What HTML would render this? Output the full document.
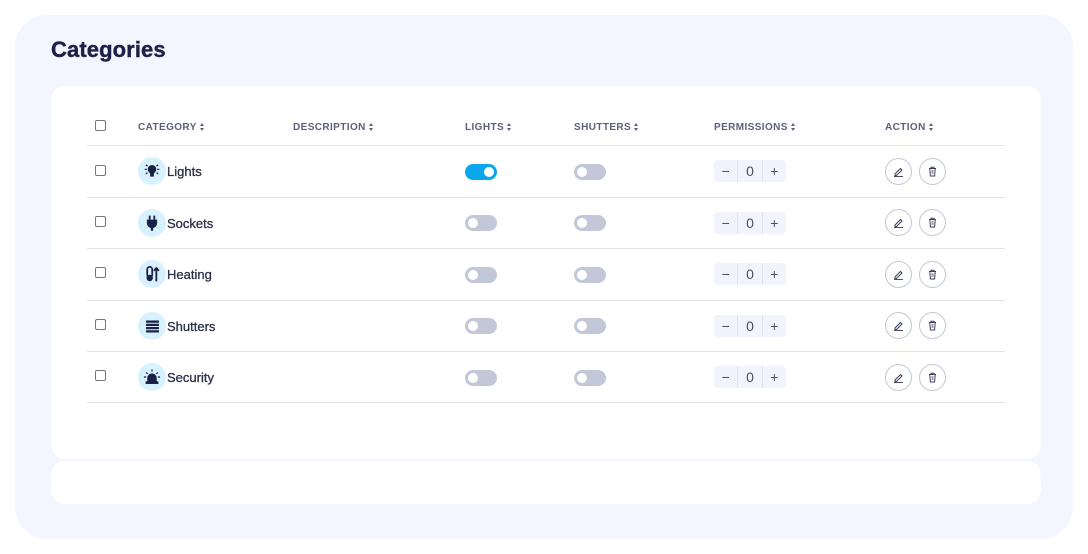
<!DOCTYPE html>
<html><head><style>
*{box-sizing:border-box;margin:0;padding:0}
body{width:1088px;height:554px;background:#fff;font-family:"Liberation Sans",sans-serif;position:relative;overflow:hidden}
.outer{position:absolute;left:15px;top:15px;width:1058px;height:524px;background:#f3f6ff;border-radius:32px}
h1{position:absolute;left:51px;top:37px;font-size:22px;font-weight:900;color:#1b2147;letter-spacing:0.1px;-webkit-text-stroke:0.4px #1b2147}
.card{position:absolute;left:51px;top:86px;width:990px;height:373px;background:#fff;border-radius:14px}
.card2{position:absolute;left:51px;top:461px;width:990px;height:43px;background:#fff;border-radius:14px}
.a{position:absolute}
.hd{font-size:10px;font-weight:bold;color:#5b6178;letter-spacing:0.4px;top:122px}
.sort{display:inline-block;position:relative;width:5px;height:8px;margin-left:3px;vertical-align:-1px}
.sort:before,.sort:after{content:"";position:absolute;left:0;border-left:2.5px solid transparent;border-right:2.5px solid transparent}
.sort:before{top:0;border-bottom:3px solid #5b6178}
.sort:after{bottom:0;border-top:3px solid #5b6178}
.line{left:87px;width:918px;height:1px;background:#e2e3e8}
.cb{width:11px;height:11px;border:1px solid #767676;border-radius:2px;left:95px;background:#fff}
.ic{left:138px;width:28px;height:28px;border-radius:50%;background:#d7f1ff;display:flex;align-items:center;justify-content:center}
.nm{left:167px;font-size:13px;color:#2b2f45;font-weight:normal;-webkit-text-stroke:0.3px #2b2f45}
.tg{width:32px;height:16px;border-radius:8px;background:#c3c8d9}
.tg:after{content:"";position:absolute;left:3px;top:3px;width:10px;height:10px;border-radius:50%;background:#fff}
.tg.on{background:#0aa7ec}.tg.on:after{left:19px}
.pm{left:714px;width:72px;height:22px;background:#f1f4fd;border-radius:4px;display:flex;font-size:14px;color:#4a4f66}
.pm span{flex:1;text-align:center;line-height:22px}
.pm span:nth-child(2){border-left:1px solid #dfe3ee;border-right:1px solid #dfe3ee}
.btn{width:27px;height:27px;border:1px solid #c2c6d6;border-radius:50%;display:flex;align-items:center;justify-content:center;background:#fff}
</style></head><body>
<div class="outer"></div>
<h1>Categories</h1>
<div class="card"></div>
<div class="card2"></div>

<div class="a cb" style="top:120px"></div>
<div class="a hd" style="left:138px">CATEGORY<span class="sort"></span></div>
<div class="a hd" style="left:293px">DESCRIPTION<span class="sort"></span></div>
<div class="a hd" style="left:465px">LIGHTS<span class="sort"></span></div>
<div class="a hd" style="left:574px">SHUTTERS<span class="sort"></span></div>
<div class="a hd" style="left:714px">PERMISSIONS<span class="sort"></span></div>
<div class="a hd" style="left:885px">ACTION<span class="sort"></span></div>
<div class="a line" style="top:145px"></div>
<div class="a line" style="top:197px"></div>
<div class="a line" style="top:248px"></div>
<div class="a line" style="top:300px"></div>
<div class="a line" style="top:351px"></div>
<div class="a line" style="top:402px"></div>

<div class="a cb" style="top:165px"></div>
<div class="a ic" style="top:157px"><svg width="18" height="16" viewBox="0 0 16 14"><circle cx="8" cy="5.5" r="3.8" fill="#1b2147"/><rect x="6.3" y="8.5" width="3.4" height="3.5" fill="#1b2147"/><path d="M1.5 5.5h2M12.5 5.5h2M2.5 1.5l1.5 1.2M13.5 1.5l-1.5 1.2M2.5 9.5l1.5-1M13.5 9.5l-1.5-1" stroke="#1b2147" stroke-width="1.1"/></svg></div>
<div class="a nm" style="top:164px">Lights</div>
<div class="a tg on" style="left:465px;top:164px"></div>
<div class="a tg" style="left:574px;top:164px"></div>
<div class="a pm" style="top:160px"><span>−</span><span>0</span><span>+</span></div>

<div class="a cb" style="top:216px"></div>
<div class="a ic" style="top:209px"><svg width="16" height="16" viewBox="0 0 14 14"><path d="M5 0.5v3.5M9 0.5v3.5" stroke="#1b2147" stroke-width="1.6"/><path d="M2.5 4h9v3a4.5 4.5 0 0 1-9 0z" fill="#1b2147"/><rect x="6" y="10" width="2" height="3.8" fill="#1b2147"/></svg></div>
<div class="a nm" style="top:216px">Sockets</div>
<div class="a tg" style="left:465px;top:215px"></div>
<div class="a tg" style="left:574px;top:215px"></div>
<div class="a pm" style="top:212px"><span>−</span><span>0</span><span>+</span></div>

<div class="a cb" style="top:267px"></div>
<div class="a ic" style="top:260px"><svg width="16" height="16" viewBox="0 0 14 14"><rect x="2.8" y="0.8" width="4.4" height="9" rx="2.2" fill="none" stroke="#1b2147" stroke-width="1.5"/><circle cx="5" cy="10.5" r="2.8" fill="#1b2147"/><path d="M10.8 13.5V2M8.6 4.2l2.2-2.4 2.2 2.4" stroke="#1b2147" stroke-width="1.6" fill="none"/></svg></div>
<div class="a nm" style="top:267px">Heating</div>
<div class="a tg" style="left:465px;top:267px"></div>
<div class="a tg" style="left:574px;top:267px"></div>
<div class="a pm" style="top:263px"><span>−</span><span>0</span><span>+</span></div>

<div class="a cb" style="top:319px"></div>
<div class="a ic" style="top:312px"><svg width="15" height="13" viewBox="0 0 14 12"><path d="M1 1.5h12M1 4.5h12M1 7.5h12M1 10.5h12" stroke="#1b2147" stroke-width="2.1"/></svg></div>
<div class="a nm" style="top:319px">Shutters</div>
<div class="a tg" style="left:465px;top:318px"></div>
<div class="a tg" style="left:574px;top:318px"></div>
<div class="a pm" style="top:315px"><span>−</span><span>0</span><span>+</span></div>

<div class="a cb" style="top:370px"></div>
<div class="a ic" style="top:363px"><svg width="18" height="16" viewBox="0 0 16 14"><path d="M3.8 11V8a4.2 4.2 0 0 1 8.4 0v3z" fill="#1b2147"/><rect x="2.3" y="10.8" width="11.4" height="2.4" fill="#1b2147"/><path d="M0.8 7h2M13.2 7h2M2.8 3l1.3 1.2M13.2 3l-1.3 1.2M8 0.3v1.8" stroke="#1b2147" stroke-width="1.1"/></svg></div>
<div class="a nm" style="top:370px">Security</div>
<div class="a tg" style="left:465px;top:370px"></div>
<div class="a tg" style="left:574px;top:370px"></div>
<div class="a pm" style="top:366px"><span>−</span><span>0</span><span>+</span></div>

<div class="a" style="left:885px;top:158px">
<div class="a btn" style="left:0;top:0"><svg width="11" height="11" viewBox="0 0 11 11"><path d="M2 8l5.5-5.5 1.5 1.5L3.5 9.5H2z" fill="none" stroke="#3a3f57" stroke-width="1"/><path d="M1 10.5h9" stroke="#3a3f57" stroke-width="0.9"/></svg></div>
<div class="a btn" style="left:34px;top:0"><svg width="11" height="11" viewBox="0 0 11 11"><path d="M2 2.5h7M4 2.5V1.2h3v1.3M2.8 2.5l.6 7.5h4.2l.6-7.5M4.5 5h2M4.5 7h2" fill="none" stroke="#3a3f57" stroke-width="1"/></svg></div>
</div>
<div class="a" style="left:885px;top:209px">
<div class="a btn" style="left:0;top:0"><svg width="11" height="11" viewBox="0 0 11 11"><path d="M2 8l5.5-5.5 1.5 1.5L3.5 9.5H2z" fill="none" stroke="#3a3f57" stroke-width="1"/><path d="M1 10.5h9" stroke="#3a3f57" stroke-width="0.9"/></svg></div>
<div class="a btn" style="left:34px;top:0"><svg width="11" height="11" viewBox="0 0 11 11"><path d="M2 2.5h7M4 2.5V1.2h3v1.3M2.8 2.5l.6 7.5h4.2l.6-7.5M4.5 5h2M4.5 7h2" fill="none" stroke="#3a3f57" stroke-width="1"/></svg></div>
</div>
<div class="a" style="left:885px;top:261px">
<div class="a btn" style="left:0;top:0"><svg width="11" height="11" viewBox="0 0 11 11"><path d="M2 8l5.5-5.5 1.5 1.5L3.5 9.5H2z" fill="none" stroke="#3a3f57" stroke-width="1"/><path d="M1 10.5h9" stroke="#3a3f57" stroke-width="0.9"/></svg></div>
<div class="a btn" style="left:34px;top:0"><svg width="11" height="11" viewBox="0 0 11 11"><path d="M2 2.5h7M4 2.5V1.2h3v1.3M2.8 2.5l.6 7.5h4.2l.6-7.5M4.5 5h2M4.5 7h2" fill="none" stroke="#3a3f57" stroke-width="1"/></svg></div>
</div>
<div class="a" style="left:885px;top:312px">
<div class="a btn" style="left:0;top:0"><svg width="11" height="11" viewBox="0 0 11 11"><path d="M2 8l5.5-5.5 1.5 1.5L3.5 9.5H2z" fill="none" stroke="#3a3f57" stroke-width="1"/><path d="M1 10.5h9" stroke="#3a3f57" stroke-width="0.9"/></svg></div>
<div class="a btn" style="left:34px;top:0"><svg width="11" height="11" viewBox="0 0 11 11"><path d="M2 2.5h7M4 2.5V1.2h3v1.3M2.8 2.5l.6 7.5h4.2l.6-7.5M4.5 5h2M4.5 7h2" fill="none" stroke="#3a3f57" stroke-width="1"/></svg></div>
</div>
<div class="a" style="left:885px;top:364px">
<div class="a btn" style="left:0;top:0"><svg width="11" height="11" viewBox="0 0 11 11"><path d="M2 8l5.5-5.5 1.5 1.5L3.5 9.5H2z" fill="none" stroke="#3a3f57" stroke-width="1"/><path d="M1 10.5h9" stroke="#3a3f57" stroke-width="0.9"/></svg></div>
<div class="a btn" style="left:34px;top:0"><svg width="11" height="11" viewBox="0 0 11 11"><path d="M2 2.5h7M4 2.5V1.2h3v1.3M2.8 2.5l.6 7.5h4.2l.6-7.5M4.5 5h2M4.5 7h2" fill="none" stroke="#3a3f57" stroke-width="1"/></svg></div>
</div>
</body></html>
